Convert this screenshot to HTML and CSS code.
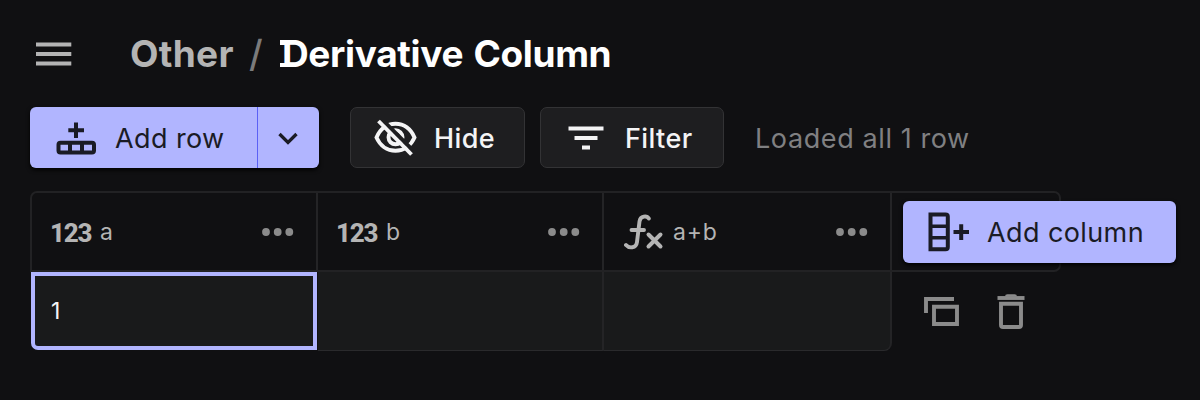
FILE: index.html
```html
<!DOCTYPE html>
<html lang="en">
<head>
<meta charset="utf-8">
<title>Derivative Column</title>
<link rel="stylesheet" href="styles.css">
</head>
<body>
<header class="header">
  <svg class="menu" width="36" height="24" viewBox="0 0 36 24"><path d="M0 2.5H35.300M0 12H35.300M0 21.5H35.300" stroke="currentColor" stroke-width="3.8"/></svg>
  <h1 class="title"><span class="crumb">Other</span><span class="slash">/</span><span class="name">Derivative Column</span></h1>
</header>
<div class="toolbar">
  <div class="split">
    <button class="add-row">
      <svg width="40" height="34" viewBox="0 0 40 34" fill="none" stroke="currentColor"><rect x="2.500" y="21.8" width="35.500" height="9.800" rx="2" stroke-width="4"/><path d="M14 20V33M26 20V33" stroke-width="4"/><path d="M20 1.500V17M12.300 9.200H28" stroke-width="4"/></svg>
      <span class="add-row-label">Add row</span>
    </button>
    <button class="drop"><svg width="20" height="14" viewBox="0 0 20 14" fill="none"><path d="M1.500 2L10 10.500L18.500 2" stroke="currentColor" stroke-width="3.300"/></svg></button>
  </div>
  <button class="btn hide">
    <svg width="44" height="38" viewBox="0 0 44 38" fill="none" stroke="currentColor"><path d="M2.500 18.500C6 10 13 4.700 21.500 4.700S37 10 40.500 18.500C37 26.500 30 31.800 21.500 31.800S6 26.500 2.500 18.500Z" stroke-width="3.9"/><circle cx="21.500" cy="18.300" r="7" stroke-width="3.9"/><path d="M8 .5L41.500 34" class="gap" stroke-width="4"/><path d="M4.500 2L37.500 35.500" stroke-width="3.9"/></svg>
    <span class="hide-label">Hide</span>
  </button>
  <button class="btn filter">
    <svg width="36" height="24" viewBox="0 0 36 24"><path d="M.5 2.500H35.500M6.500 12H29.500M14 21.500H22" stroke="currentColor" stroke-width="4"/></svg>
    <span class="filter-label">Filter</span>
  </button>
  <span class="status">Loaded all 1 row</span>
</div>
<main class="table">
  <div class="row head">
    <div class="cell"><span class="numeric">123</span><span class="label">a</span><svg class="dots" width="32" height="8"><circle cx="4" cy="4" r="3.900"/><circle cx="15.700" cy="4" r="3.900"/><circle cx="27.300" cy="4" r="3.900"/></svg></div>
    <div class="cell"><span class="numeric">123</span><span class="label">b</span><svg class="dots" width="32" height="8"><circle cx="4" cy="4" r="3.900"/><circle cx="15.700" cy="4" r="3.900"/><circle cx="27.300" cy="4" r="3.900"/></svg></div>
    <div class="cell"><svg class="function" width="40" height="36" viewBox="0 0 40 36" fill="none" stroke="currentColor" stroke-linecap="round" stroke-linejoin="round"><path d="M24.800 4.500C23 1.500 16.300 1.500 15.500 7.500L13 28C12.200 34.500 5 34.500 2 31" stroke-width="3.900"/><path d="M7.500 16H20" stroke-width="3.900"/><path d="M24.500 20.500L36.500 32.500M36.500 20.500L24.500 32.500" stroke-width="4"/></svg><span class="label fx-label">a+b</span><svg class="dots" width="32" height="8"><circle cx="4" cy="4" r="3.900"/><circle cx="15.700" cy="4" r="3.900"/><circle cx="27.300" cy="4" r="3.900"/></svg></div>
    <div class="end">
      <button class="add-column">
        <svg width="42" height="40" viewBox="0 0 42 40" fill="none" stroke="currentColor"><path d="M2.500 2.500H17.500Q19.800 2.500 19.800 4.500V35Q19.800 37.300 17.500 37.300H2.500Z" stroke-width="4"/><path d="M2 14.300H20M2 25.800H20" stroke-width="3.500"/><path d="M25.500 20H41M33.200 12.200V28" stroke-width="4"/></svg>
        <span class="column-label">Add column</span>
      </button>
    </div>
  </div>
  <div class="row body">
    <div class="cell selected">1</div>
    <div class="cell"></div>
    <div class="cell last"></div>
    <div class="actions">
      <svg width="36" height="30" viewBox="0 0 36 30" fill="none" stroke="currentColor" stroke-width="3.900"><path d="M2 16V2H30"/><path d="M10 9.800H33V27H10Z"/></svg>
      <svg width="28" height="35" viewBox="0 0 28 35" fill="none" stroke="currentColor" stroke-width="3.900"><path d="M.5 4H27.500"/><path d="M8 2.500Q8 .2 10.500 .2H17.500Q20 .2 20 2.500Z" fill="currentColor" stroke="none"/><path d="M4 9.700H24V31Q24 33 22 33H6Q4 33 4 31Z"/></svg>
    </div>
  </div>
</main>
</body>
</html>
```
FILE: styles.css
```css
* { box-sizing: border-box; }
body {
  margin: 0;
  height: 400px;
  overflow: hidden;
  padding: 28px 0 0 30px;
  background: #101012;
  color: #f4f4f5;
  font-family: Inter, "Liberation Sans", sans-serif;
}
svg { display: block; flex: none; }
button {
  display: flex;
  align-items: center;
  border: 0;
  color: inherit;
  font: inherit;
  font-size: 27px;
  letter-spacing: .4px;
  white-space: nowrap;
}
.header { display: flex; align-items: center; height: 51px; padding-left: 6px; }
.menu { color: #b4b4b4; }
.title {
  display: flex;
  margin: 0 0 0 58px;
  font-size: 37px;
  line-height: 49px;
  font-weight: 700;
  white-space: nowrap;
}
.crumb { width: 119px; color: #b4b4b4; letter-spacing: .3px; }
.slash { width: 33px; color: #7b7b7b; font-weight: 500; }
.name { position: relative; color: #fff; letter-spacing: -.35px; word-spacing: 2px; }
/* slab feet on the initial */
.name::before, .name::after {
  content: "";
  position: absolute;
  left: -2px;
  width: 8px;
  height: 4.5px;
  background: #fff;
}
.name::before { top: 11px; }
.name::after { top: 33.5px; }
.toolbar { display: flex; margin-top: 28px; height: 61px; }
.split {
  display: flex;
  width: 289px;
  margin-right: 31px;
  border-radius: 6px;
  overflow: hidden;
  color: #1a1b25;
  box-shadow: 0 2px 4px #000;
}
.add-row { width: 227px; padding: 1px 0 0 26px; background: #b1b5ff; }
.add-row-label { margin-left: 19px; padding-top: 1px; }
.drop { width: 62px; padding: 2px 2px 0 0; justify-content: center; background: #b1b5ff; border-left: 1px solid #5a60f5; }
.btn { padding: 0; background: #1e1e20; border: 1px solid #333335; border-radius: 7px; font-weight: 500; }
.hide { width: 175px; padding-left: 23px; margin-right: 15px; }
.hide-label { margin-left: 16px; padding-top: 2px; }
.gap { stroke: #1e1e20; }
.filter { width: 184px; padding-left: 27px; margin-right: 31px; }
.filter-label { margin-left: 21px; padding-top: 2px; }
.status { align-self: center; padding-top: 2px; color: #808082; font-size: 27px; letter-spacing: .6px; }
.table { margin-top: 23px; width: 1146px; color: #b4b4b4; }
.row { display: grid; grid-template-columns: 288px 286px 288px 1fr; height: 80px; }
.cell { display: flex; align-items: center; border-right: 2px solid #242426; padding-left: 19px; }
.head { width: 1031px; border: 2px solid #222224; border-radius: 7px; border-bottom-left-radius: 0; grid-template-columns: 286px 286px 288px 1fr; height: 81px; }
.head .cell:nth-child(3) { padding-left: 20px; }
.numeric { width: 40px; margin-left: -1px; padding-top: 2px; font: 800 26px Roboto, sans-serif; letter-spacing: -1.2px; }
.label { margin-left: 11px; padding-top: 1px; font-size: 23px; }
.cell:nth-child(-n+2) > .label { margin-left: 10px; }
.fx-label { margin-left: 9px; letter-spacing: .8px; }
.dots { margin-left: auto; margin-right: 22px; fill: #8b8b8b; }
.end { padding: 8px 0 0 11px; }
.add-column {
  width: 273px;
  height: 62px;
  padding: 0 0 0 25px;
  border-radius: 6px;
  background: #b1b5ff;
  color: #1a1b25;
  box-shadow: 0 2px 4px #000;
}
.column-label { margin-left: 17px; }
.body { height: 79px; }
.body .cell { background: #191a1b; border-bottom: 1px solid #2a2a2c; }
.body .last { border-bottom-right-radius: 8px; }
.body .selected { border: 4px solid #b1b5ff; border-bottom-left-radius: 7px; margin: 0 1px 1px 1px; padding-left: 16px; color: #f4f4f5; font-size: 23px; }
.actions { display: flex; align-items: center; gap: 37px; padding-left: 32px; color: #8b8b8b; }
```
